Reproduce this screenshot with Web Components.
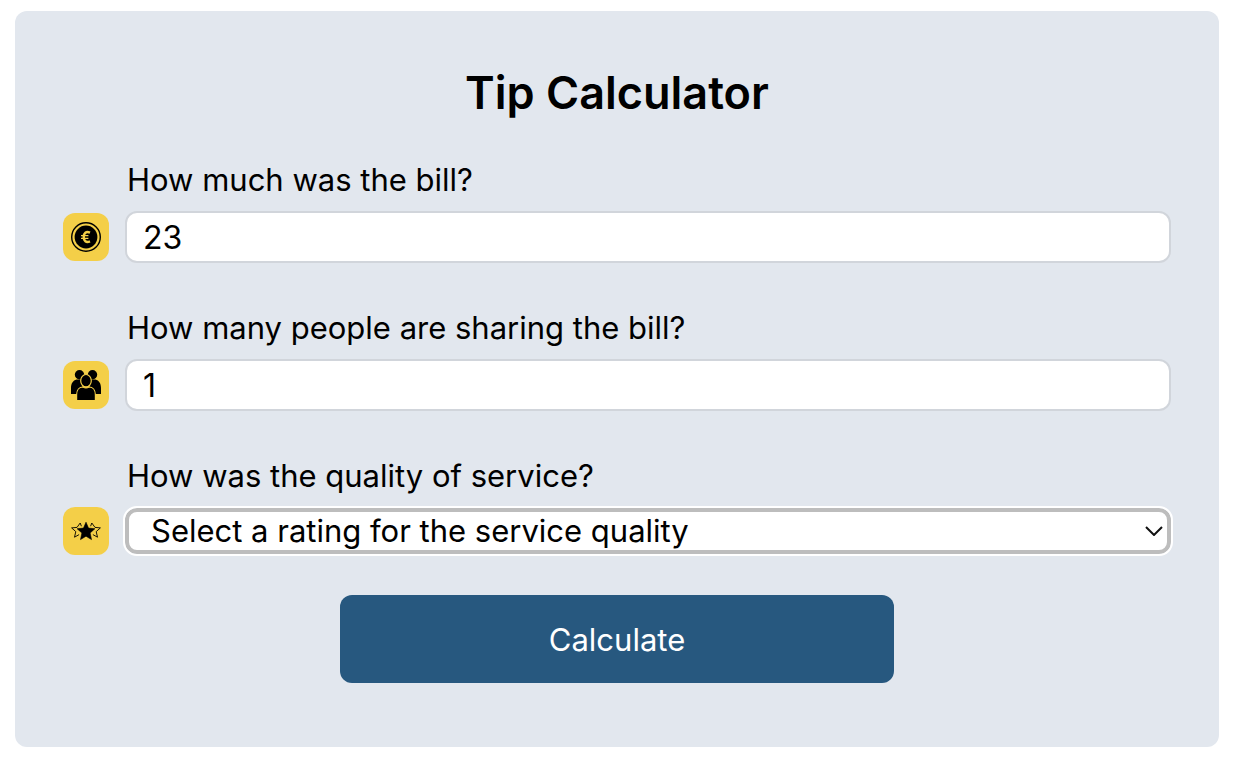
<!DOCTYPE html>
<html lang="en">
<head>
<meta charset="utf-8">
<title>Tip Calculator</title>
<style>
  body { margin: 0; padding: 11px 15px; background: #fff; color: #000; font-family: Inter, "Liberation Sans", sans-serif; }
</style>
</head>
<body>
<tip-calculator></tip-calculator>
<script>
const fieldStyle = `
  :host { display: block; }
  label { display: block; padding-left: 2px; margin-bottom: 14px; font-size: 31px; line-height: 34px; margin-left: 62px; }
  .row { display: flex; align-items: center; gap: 16px; }
  .control { position: relative; flex: 1; min-width: 0; display: flex; }
  input, select { box-sizing: border-box; width: 100%; margin: 0; appearance: none; background: #fff; color: #000; font: inherit; border-radius: 12px; }
  input { height: 52px; padding: 0 16px; border: 2px solid #d1d5db; outline: 0; font-size: 32px; }
  select { height: 46px; padding: 0 48px 0 22px; border: 4px solid #bdbdbd; outline: 2px solid #fff; font-size: 31px; line-height: 38px; }
  .chevron { position: absolute; right: 8px; top: 50%; width: 18px; height: 10px; margin-top: -5px; pointer-events: none; }
`;

class IconTile extends HTMLElement {
  connectedCallback() {
    this.attachShadow({ mode: 'open' }).innerHTML = `
      <style>
        :host { display: flex; flex: none; align-items: center; justify-content: center; width: 46px; height: 48px; border-radius: 12px; background: #f4cf48; }
        ::slotted(svg) { display: block; width: 30px; height: 30px; }
      </style><slot></slot>`;
  }
}
customElements.define('icon-tile', IconTile);

class NumberField extends HTMLElement {
  connectedCallback() {
    this.attachShadow({ mode: 'open' }).innerHTML = `
      <style>${fieldStyle}</style>
      <label for="control">${this.getAttribute('label')}</label>
      <div class="row"><slot name="icon"></slot>
        <div class="control"><input id="control" type="text" inputmode="decimal" value="${this.getAttribute('value')}"></div>
      </div>`;
  }
}
customElements.define('number-field', NumberField);

class RatingField extends HTMLElement {
  connectedCallback() {
    this.attachShadow({ mode: 'open' }).innerHTML = `
      <style>${fieldStyle}</style>
      <label for="control">${this.getAttribute('label')}</label>
      <div class="row"><slot name="icon"></slot>
        <div class="control">
          <select id="control"><option>${this.getAttribute('placeholder')}</option></select>
          <svg class="chevron" viewBox="0 0 18 10" fill="none" stroke="#111" stroke-width="2" aria-hidden="true"><path d="M1 1l8 8 8-8"/></svg>
        </div>
      </div>`;
  }
}
customElements.define('rating-field', RatingField);

class PrimaryButton extends HTMLElement {
  connectedCallback() {
    this.attachShadow({ mode: 'open' }).innerHTML = `
      <style>
        :host { display: block; width: 50%; }
        button { display: block; width: 100%; height: 88px; padding: 0; border: 0; border-radius: 12px; background: #27587f; color: #fff; font: inherit; font-size: 31px; cursor: pointer; }
      </style><button type="button"><slot></slot></button>`;
  }
}
customElements.define('primary-button', PrimaryButton);

class TipCalculator extends HTMLElement {
  connectedCallback() {
    this.attachShadow({ mode: 'open' }).innerHTML = `
      <style>
        :host { display: block; padding: 48px 48px 64px; border-radius: 12px; background: #e2e7ee; }
        h1 { margin: 0 0 36px; font-size: 45px; line-height: 68px; font-weight: 600; text-align: center; }
        form { display: grid; gap: 48px; }
        primary-button { margin: 40px auto 0; }
      </style>
      <h1>Tip Calculator</h1>
      <form>
        <number-field label="How much was the bill?" value="23">
          <icon-tile slot="icon"><svg viewBox="0 0 30 30" aria-hidden="true">
            <circle cx="15" cy="15" r="14.3" fill="none" stroke="#000" stroke-width="1.4"/>
            <circle cx="15" cy="15" r="11.4"/>
            <path d="M19 10.600c-4-1.800-6.300.6-6.300 4.400s2.300 6.200 6.300 4.400" fill="none" stroke="#f4cf48" stroke-width="2.400"/>
            <path d="M10 13.600h7.400M10 16.400h7.400" fill="none" stroke="#f4cf48" stroke-width="1.300"/>
          </svg></icon-tile>
        </number-field>
        <number-field label="How many people are sharing the bill?" value="1">
          <icon-tile slot="icon"><svg viewBox="0 0 30 30" aria-hidden="true">
            <circle cx="8.500" cy="4.800" r="4.700"/><circle cx="21.500" cy="4.800" r="4.700"/>
            <path d="M0 24v-6c0-4.500 2-7.500 5.500-8.500h4.500l3 14.500zM30 24v-6c0-4.500-2-7.500-5.500-8.500h-4.500l-3 14.500z"/>
            <g stroke="#f4cf48" stroke-width="1.200">
              <ellipse cx="15" cy="10.700" rx="5.300" ry="6.200"/>
              <path d="M5.600 30.600v-5.600c0-5 2.700-8 6.400-8 2 1.300 4 1.300 6 0 3.700 0 6.400 3 6.400 8v5.600z"/>
            </g>
          </svg></icon-tile>
        </number-field>
        <rating-field label="How was the quality of service?" placeholder="Select a rating for the service quality">
          <icon-tile slot="icon"><svg viewBox="0 0 30 30" aria-hidden="true">
            <path d="M15 6.200l2.500 5.900 6.400.6-4.800 4.300 1.400 6.600-5.500-3.400-5.500 3.400 1.400-6.600-4.800-4.300 6.400-.6z" stroke="#000" stroke-width=".6"/>
            <g fill="none" stroke="#000" stroke-width=".9">
              <path d="M10.400 10.200L9.200 7 6 11.400l-5.400.5 4.200 3.700-1.300 5.600 4.600-2.600"/>
              <path d="M19.600 10.200L20.800 7l3.200 4.400 5.400.5-4.200 3.700 1.300 5.600-4.600-2.600"/>
            </g>
          </svg></icon-tile>
        </rating-field>
      </form>
      <primary-button>Calculate</primary-button>`;
  }
}
customElements.define('tip-calculator', TipCalculator);
</script>
</body>
</html>
